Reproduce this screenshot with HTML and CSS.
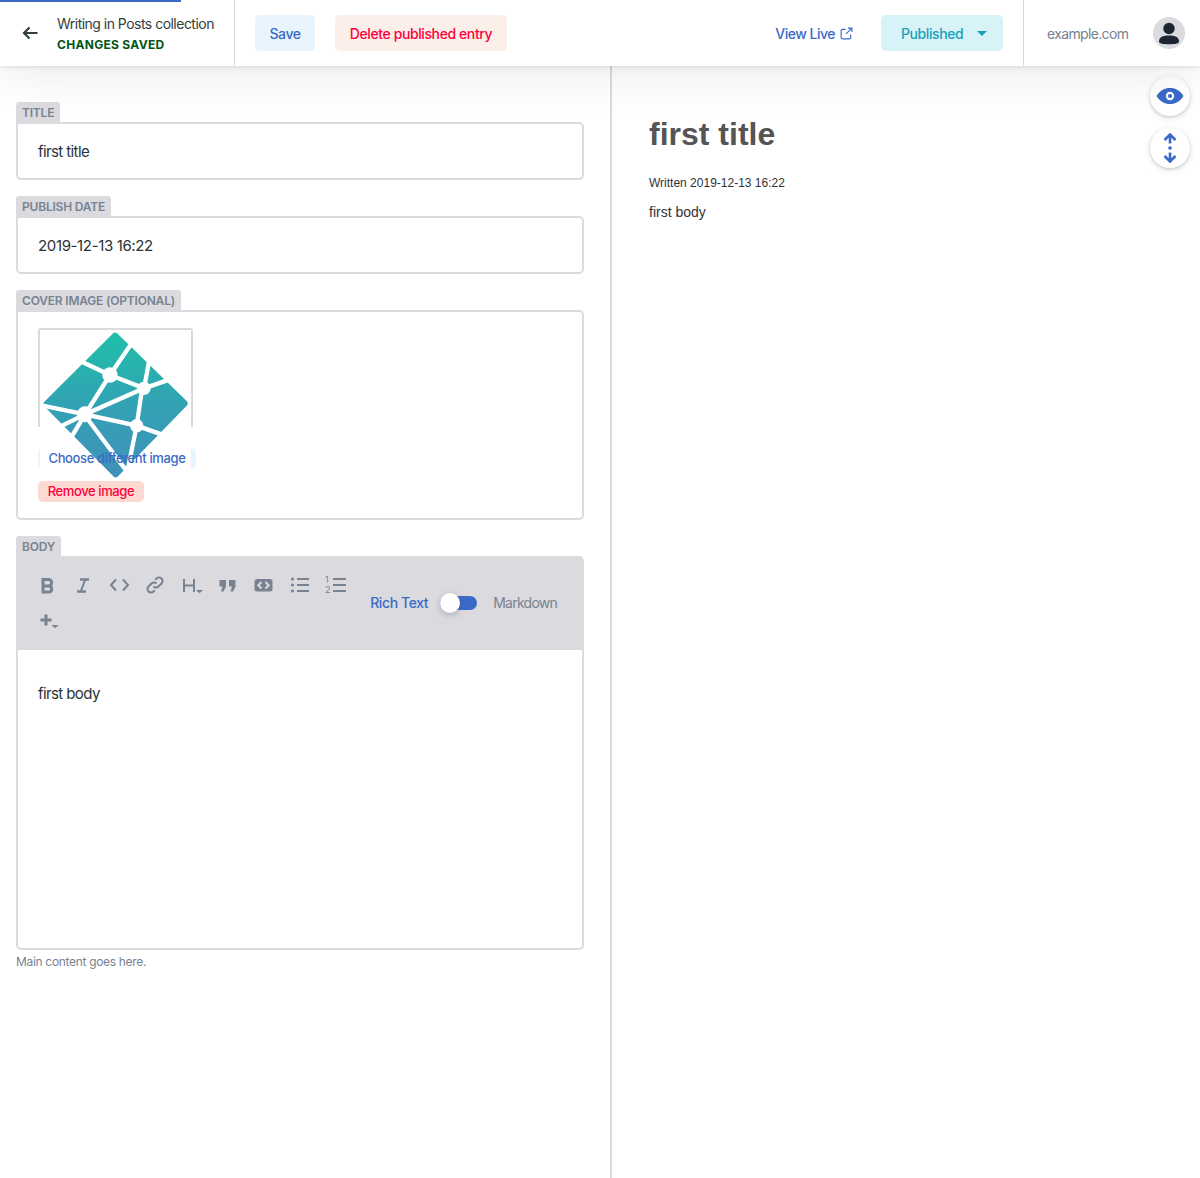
FILE: index.html
```html
<!DOCTYPE html>
<html>
<head>
    <title>Writing in Posts collection</title>
    <link rel="stylesheet" href="styles.css">
</head>
<body>
    <div class="page">
        <header class="topbar">
            <div class="progress"></div>
            <div class="back">
                <svg class="back-arrow" viewBox="0 0 16 14"><path d="M15.500 7H2M7.500 1.500 2 7l5.500 5.500"/></svg>
                <div class="back-text">
                    <div class="back-title">Writing in Posts collection</div>
                    <div class="back-status">CHANGES SAVED</div>
                </div>
            </div>
            <div class="actions">
                <button class="btn btn-save">Save</button>
                <button class="btn btn-delete">Delete published entry</button>
                <a class="view-live">View Live
                    <svg viewBox="0 0 14 14"><path d="M11.500 8v3.200a1.600 1.600 0 0 1-1.600 1.600H2.800a1.600 1.600 0 0 1-1.600-1.600V4.100a1.600 1.600 0 0 1 1.600-1.600H6M8.500 1.200h4.300v4.300M12.800 1.200 6.500 7.500"/></svg>
                </a>
                <button class="btn btn-status">Published<span class="caret"></span></button>
            </div>
            <div class="account">
                <span class="site">example.com</span>
                <span class="avatar">
                    <svg viewBox="0 0 32 32"><circle cx="16" cy="11.500" r="5.700"/><path d="M6 24.500c0-4.500 4-6 10-6s10 1.500 10 6c0 1.800-3 2.800-10 2.800s-10-1-10-2.800z"/></svg>
                </span>
            </div>
        </header>

        <main class="panes">
            <section class="editor-pane">
                <div class="field">
                    <label class="field-label">Title</label>
                    <input class="field-input" type="text" value="first title">
                </div>
                <div class="field">
                    <label class="field-label">Publish Date</label>
                    <input class="field-input field-date" type="text" value="2019-12-13 16:22">
                </div>
                <div class="field">
                    <label class="field-label">Cover Image (optional)</label>
                    <div class="field-box image-box">
                        <div class="image-frame">
                            <svg class="cover" viewBox="60 30 453 450">
                                <defs>
                                    <linearGradient id="logoFill" gradientUnits="userSpaceOnUse" x1="285" y1="30" x2="285" y2="480">
                                        <stop offset="0" stop-color="#1fc0a8"/>
                                        <stop offset="0.5" stop-color="#32a2b4"/>
                                        <stop offset="1" stop-color="#4190ba"/>
                                    </linearGradient>
                                </defs>
                                <rect x="60" y="30" width="453" height="450" fill="#fff"/>
                                <path d="M285 48 493 250 287 462 80 252z" fill="url(#logoFill)" stroke="url(#logoFill)" stroke-width="20" stroke-linejoin="round"/>
                                <g stroke="#fff" stroke-width="13" fill="none">
                                    <path d="M270 165 185 125M270 165 335 70M270 165 372 205 388 120M372 205 450 178M372 205 195 283 270 165M195 283 60 255M195 283 120 320M195 283 155 350M195 283 350 317 365 215M350 317 435 347M350 317 322 455M205 300 325 460"/>
                                </g>
                                <g fill="#fff">
                                    <circle cx="270" cy="165" r="23"/>
                                    <circle cx="372" cy="205" r="20"/>
                                    <circle cx="195" cy="283" r="24"/>
                                    <circle cx="350" cy="317" r="20"/>
                                </g>
                            </svg>
                        </div>
                        <button class="img-btn img-choose"><span>Choose different image</span></button>
                        <button class="img-btn img-remove"><span>Remove image</span></button>
                    </div>
                </div>
                <div class="field">
                    <label class="field-label">Body</label>
                    <div class="md-editor">
                        <div class="toolbar">
                            <div class="tools">
                                <span class="tool"><svg viewBox="0 0 24 24"><path class="s3" d="M8 6.500h5.500a3.200 3.200 0 0 1 0 6.400H8zM8 12.900h6.200a3.100 3.100 0 0 1 0 6.100H8z"/></svg></span>
                                <span class="tool"><svg viewBox="0 0 24 24"><path class="s3i" d="M9 6.500h9M6 18.500h9"/><path class="s2" d="M14.500 6 9.500 19"/></svg></span>
                                <span class="tool"><svg viewBox="0 0 24 24"><path class="s2" d="M9 6.500 4 12l5 5.500M16 6.500l5 5.500-5 5.500"/></svg></span>
                                <span class="tool"><svg viewBox="0 0 24 24"><path class="s2" d="M10.500 13.500a3.500 3.500 0 0 0 5 0l3-3a3.500 3.500 0 0 0-5-5l-1.200 1.200M13.500 10.500a3.500 3.500 0 0 0-5 0l-3 3a3.500 3.500 0 0 0 5 5l1.200-1.200"/></svg></span>
                                <span class="tool"><svg viewBox="0 0 24 24"><path class="s2" d="M5 6v13M15 6v13M5 12.500h10"/><path class="fill" d="M17 17h7l-3.500 3.200z"/></svg></span>
                                <span class="tool"><svg viewBox="0 0 24 24"><path class="fill" d="M4.500 7H11v6.500l-2.500 5H6l1.500-5h-3zM14 7h6.500v6.500l-2.500 5h-2.500l1.500-5H14z"/></svg></span>
                                <span class="tool"><svg viewBox="0 0 24 24"><rect class="fill" x="3.500" y="6" width="18" height="12.500" rx="2.500"/><path class="notch" d="M10.500 9 7.300 12.200l3.200 3.300M14.500 9l3.200 3.200-3.200 3.300"/></svg></span>
                                <span class="tool"><svg viewBox="0 0 24 24"><circle class="fill" cx="5.500" cy="6" r="1.600"/><circle class="fill" cx="5.500" cy="12" r="1.600"/><circle class="fill" cx="5.500" cy="18" r="1.600"/><path class="s2" d="M10 6h12M10 12h12M10 18h12"/></svg></span>
                                <span class="tool"><svg viewBox="0 0 24 24"><text class="num" x="2" y="9.500">1</text><text class="num" x="2" y="20">2</text><path class="s2" d="M10 6h13M10 12h13M10 18h13"/></svg></span>
                                <span class="tool"><svg viewBox="0 0 24 24"><path class="s3" d="M5.500 11h11M11 5.500v11"/><path class="fill" d="M16.500 16h7l-3.500 3.200z"/></svg></span>
                            </div>
                            <div class="mode">
                                <span class="mode-on">Rich Text</span>
                                <span class="switch"><span class="knob"></span></span>
                                <span class="mode-off">Markdown</span>
                            </div>
                        </div>
                        <div class="md-content">first body</div>
                    </div>
                    <p class="hint">Main content goes here.</p>
                </div>
            </section>

            <section class="preview-pane">
                <div class="float-btns">
                    <button class="round-btn">
                        <svg viewBox="0 0 28 18"><path class="eye" d="M0.500 9C4 3.500 8.500 1 14 1s10 2.500 13.500 8C24 14.500 19.500 17 14 17S4 14.500 0.500 9z"/><circle class="eye-ring" cx="14" cy="9" r="4.200"/><circle class="eye-dot" cx="14" cy="9" r="2"/></svg>
                    </button>
                    <button class="round-btn">
                        <svg viewBox="0 0 14 30"><path class="sync" d="M7 10.500V2M1.500 7 7 1.500 12.500 7M7 19.500v9M1.500 23 7 28.500l5.500-5.500"/><circle class="sync-dot" cx="7" cy="15" r="1.800"/></svg>
                    </button>
                </div>
                <h1>first title</h1>
                <p class="written">Written 2019-12-13 16:22</p>
                <p class="preview-body">first body</p>
            </section>
        </main>
    </div>
</body>
</html>
```

FILE: styles.css
```css
* {
    box-sizing: border-box;
}

body {
    margin: 0;
    font-family: Inter, "Noto Sans", sans-serif;
    font-size: 14px;
    letter-spacing: -0.4px;
    color: #313d3e;
    background-color: #fff;
}

button, input {
    font-family: inherit;
    letter-spacing: inherit;
}

button {
    border: none;
    cursor: pointer;
}

.page {
    display: flex;
    flex-direction: column;
    height: 100vh;
    overflow: hidden;
}

/* top bar */
.topbar {
    position: relative;
    z-index: 5;
    flex: none;
    display: flex;
    height: 66px;
    background-color: #fff;
    box-shadow: 0 2px 6px 0 rgba(68, 74, 87, 0.05), 0 1px 3px 0 rgba(68, 74, 87, 0.1), 0 2px 54px rgba(0, 0, 0, 0.1);
}

.progress {
    position: absolute;
    top: 0;
    left: 0;
    width: 181px;
    height: 2px;
    background-color: #3a69c7;
}

.back {
    display: flex;
    align-items: center;
    width: 235px;
    padding: 0 0 0 22px;
    border-right: 1px solid #dadadf;
}

.back-arrow {
    width: 16px;
    height: 14px;
    margin-right: 19px;
    fill: none;
    stroke: #313d3e;
    stroke-width: 2.2;
}

.back-text {
    padding-top: 2px;
}

.back-title {
    line-height: 20px;
    letter-spacing: -0.52px;
    color: #313d3e;
}

.back-status {
    margin-top: 2px;
    font-size: 12px;
    line-height: 18px;
    font-weight: 700;
    letter-spacing: 0.3px;
    color: #005614;
}

.actions {
    flex: 1;
    display: flex;
    align-items: center;
    padding: 0 20px;
    border-right: 1px solid #dadadf;
}

.btn {
    height: 36px;
    padding: 0 15px;
    border-radius: 5px;
    font-size: 14px;
    font-weight: 500;
}

.btn-save {
    width: 60px;
    margin-right: 20px;
    padding: 0;
    background-color: #e8f5fe;
    color: #3a69c7;
}

.btn-delete {
    width: 172px;
    padding: 0;
    background-color: #fcefea;
    color: #ff003b;
}

.view-live {
    display: flex;
    align-items: center;
    margin-left: auto;
    font-weight: 500;
    letter-spacing: -0.5px;
    color: #3a69c7;
}

.view-live svg {
    width: 13px;
    height: 13px;
    margin-left: 5px;
    fill: none;
    stroke: #3a69c7;
    stroke-width: 1.2;
}

.btn-status {
    display: flex;
    align-items: center;
    width: 122px;
    margin-left: 28px;
    padding: 0 0 0 20px;
    background-color: #d8f3f8;
    color: #17a2b8;
}

.caret {
    width: 0;
    height: 0;
    margin-left: 14px;
    border-style: solid;
    border-width: 5px 5px 0;
    border-color: #17a2b8 transparent transparent;
}

.account {
    display: flex;
    align-items: center;
    width: 176px;
    padding-left: 23px;
}

.site {
    width: 82px;
    white-space: nowrap;
    letter-spacing: -0.65px;
    color: #798291;
}

.avatar {
    width: 32px;
    height: 32px;
    margin-left: 24px;
    border-radius: 50%;
    background-color: #dadadf;
    overflow: hidden;
}

.avatar svg {
    display: block;
    width: 32px;
    height: 32px;
    fill: #1e2532;
}

/* panes */
.panes {
    flex: 1;
    display: flex;
    min-height: 0;
}

.editor-pane {
    width: 612px;
    padding: 36px 26px 0 16px;
    border-right: 2px solid #dadadf;
}

.preview-pane {
    position: relative;
    flex: 1;
    padding: 50px 37px;
    font-family: "Liberation Sans", Arial, sans-serif;
    letter-spacing: 0;
}

/* form fields */
.field {
    margin-bottom: 16px;
}

.field-label {
    display: block;
    width: fit-content;
    height: 20px;
    padding: 0 6px;
    border-radius: 3px 3px 0 0;
    background-color: #dadadf;
    font-size: 12px;
    line-height: 21px;
    font-weight: 600;
    letter-spacing: -0.2px;
    text-transform: uppercase;
    color: #798291;
}

.field-input {
    display: block;
    width: 100%;
    height: 58px;
    padding: 0 20px;
    border: 2px solid #dadadf;
    border-radius: 0 5px 5px 5px;
    outline: none;
    font-size: 15px;
    letter-spacing: -0.6px;
    color: #2b3338;
}

.field-date {
    letter-spacing: -0.36px;
}

.field-box {
    border: 2px solid #dadadf;
    border-radius: 0 5px 5px 5px;
}

.image-box {
    height: 210px;
    padding: 16px 20px;
}

.image-frame {
    position: relative;
    z-index: 1;
    width: 155px;
    height: 99px;
    border: 2px solid #dadadf;
    border-bottom: none;
    border-radius: 3px 3px 0 0;
}

.cover {
    display: block;
    width: 151px;
    height: 150px;
}

.img-btn {
    display: block;
    height: 21px;
    padding: 0 0 2px;
    border-radius: 5px;
    font-size: 13px;
    font-weight: 500;
}

.img-btn span {
    position: relative;
    z-index: 2;
}

.img-choose {
    width: 158px;
    margin-top: 21px;
    letter-spacing: -0.37px;
    background-color: #e8f5fe;
    color: #3a69c7;
}

.img-remove {
    width: 106px;
    margin-top: 12px;
    background-color: #fcd9d2;
    color: #ff003b;
}

/* body editor */
.toolbar {
    display: flex;
    align-items: center;
    height: 94px;
    padding: 11px 27px 11px 13px;
    border-radius: 0 5px 0 0;
    background-color: #dadadf;
}

.tools {
    display: flex;
    flex-wrap: wrap;
    width: 324px;
}

.tool {
    display: flex;
    align-items: center;
    justify-content: center;
    width: 36px;
    height: 36px;
}

.tool svg {
    width: 24px;
    height: 24px;
    fill: none;
}

.s2 {
    stroke: #798291;
    stroke-width: 2;
    fill: none;
}

.s3 {
    stroke: #798291;
    stroke-width: 3;
    fill: none;
}

.s3i {
    stroke: #798291;
    stroke-width: 2.6;
    fill: none;
}

.fill {
    fill: #798291;
}

.notch {
    stroke: #dadadf;
    stroke-width: 2;
    fill: none;
}

.num {
    font-size: 9px;
    letter-spacing: 0;
    fill: #798291;
}

.mode {
    display: flex;
    align-items: center;
    margin-left: auto;
    padding-bottom: 1px;
    font-weight: 500;
}

.mode-on {
    color: #3a69c7;
}

.mode-off {
    font-weight: 400;
    letter-spacing: -0.75px;
    color: #798291;
}

.switch {
    position: relative;
    width: 37px;
    height: 14px;
    margin: 1px 16px 0 12px;
    border-radius: 7px;
    background-color: #3a69c7;
}

.knob {
    position: absolute;
    top: -3px;
    left: 0;
    width: 20px;
    height: 20px;
    border-radius: 50%;
    background-color: #fff;
    box-shadow: 0 2px 6px rgba(68, 74, 87, 0.3);
}

.md-content {
    height: 300px;
    padding: 34px 20px;
    border: 2px solid #dadadf;
    border-top: none;
    border-radius: 0 0 5px 5px;
    font-size: 15px;
    line-height: 20px;
    letter-spacing: -0.6px;
    color: #2b3338;
}

.hint {
    margin: 4px 0 0;
    font-size: 12px;
    line-height: 16px;
    letter-spacing: -0.32px;
    color: #798291;
}

/* preview */
.float-btns {
    position: absolute;
    top: 10px;
    right: 10px;
    display: flex;
    flex-direction: column;
    gap: 12px;
}

.round-btn {
    display: flex;
    align-items: center;
    justify-content: center;
    width: 40px;
    height: 40px;
    padding: 0;
    border-radius: 50%;
    background-color: #fff;
    box-shadow: 0 2px 6px 0 rgba(68, 74, 87, 0.15), 0 1px 3px 0 rgba(68, 74, 87, 0.2);
}

.round-btn svg {
    width: 28px;
    height: 18px;
}

.round-btn:last-child svg {
    width: 14px;
    height: 30px;
}

.eye {
    fill: #3a69c7;
}

.eye-ring {
    fill: #fff;
}

.eye-dot {
    fill: #3a69c7;
}

.sync {
    fill: none;
    stroke: #3a69c7;
    stroke-width: 2.6;
}

.sync-dot {
    fill: #3a69c7;
}

.preview-pane h1 {
    margin: 0;
    font-size: 32px;
    line-height: 36px;
    font-weight: 700;
    color: #555;
}

.written {
    margin: 23px 0 0;
    font-size: 12px;
    line-height: 16px;
    color: #333;
}

.preview-body {
    margin: 11px 0 0;
    line-height: 20px;
    color: #333;
}
```
